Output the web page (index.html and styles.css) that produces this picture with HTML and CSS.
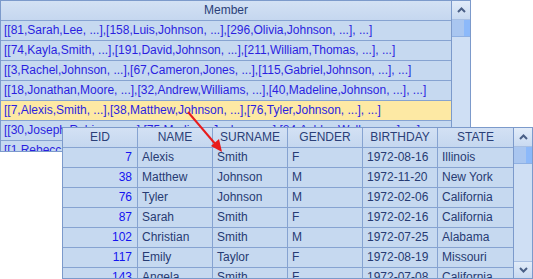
FILE: index.html
```html
<!DOCTYPE html>
<html>
<head>
<meta charset="utf-8">
<link rel="stylesheet" href="styles.css">
</head>
<body>
<div class="stage">
  <div class="grid members">
    <div class="body">
      <div class="hdr"><div class="hcell wide">Member</div></div>
      <div class="row"><div class="cell wide">[[81,Sarah,Lee, ...],[158,Luis,Johnson, ...],[296,Olivia,Johnson, ...], ...]</div></div>
      <div class="row"><div class="cell wide">[[74,Kayla,Smith, ...],[191,David,Johnson, ...],[211,William,Thomas, ...], ...]</div></div>
      <div class="row"><div class="cell wide">[[3,Rachel,Johnson, ...],[67,Cameron,Jones, ...],[115,Gabriel,Johnson, ...], ...]</div></div>
      <div class="row"><div class="cell wide">[[18,Jonathan,Moore, ...],[32,Andrew,Williams, ...],[40,Madeline,Johnson, ...], ...]</div></div>
      <div class="row sel"><div class="cell wide">[[7,Alexis,Smith, ...],[38,Matthew,Johnson, ...],[76,Tyler,Johnson, ...], ...]</div></div>
      <div class="row"><div class="cell wide">[[30,Joseph,Robinson, ...],[75,Madison,Jackson, ...],[84,Ashley,Wallace, ...], ...]</div></div>
      <div class="row"><div class="cell wide">[[1,Rebecca,Moore, ...],[19,Emma,Smith, ...],[55,Ryan,Johnson, ...], ...]</div></div>
    </div>
    <div class="sbar">
      <div class="sbtn up"><svg width="9" height="6" viewBox="0 0 9 6"><path d="M1 5 L4.5 1.5 L8 5" fill="none" stroke="#4a5f86" stroke-width="2"/></svg></div>
      <div class="thumb"><div class="shine"></div></div>
      <div class="track"></div>
      <div class="sbtn down"><svg width="9" height="6" viewBox="0 0 9 6"><path d="M1 1 L4.5 4.5 L8 1" fill="none" stroke="#4a5f86" stroke-width="2"/></svg></div>
    </div>
  </div>

  <div class="grid emps">
    <div class="body">
      <div class="hdr">
        <div class="hcell">EID</div><div class="hcell">NAME</div><div class="hcell">SURNAME</div><div class="hcell">GENDER</div><div class="hcell">BIRTHDAY</div><div class="hcell">STATE</div>
      </div>
      <div class="row"><div class="cell num">7</div><div class="cell">Alexis</div><div class="cell">Smith</div><div class="cell">F</div><div class="cell">1972-08-16</div><div class="cell">Illinois</div></div>
      <div class="row"><div class="cell num">38</div><div class="cell">Matthew</div><div class="cell">Johnson</div><div class="cell">M</div><div class="cell">1972-11-20</div><div class="cell">New York</div></div>
      <div class="row"><div class="cell num">76</div><div class="cell">Tyler</div><div class="cell">Johnson</div><div class="cell">M</div><div class="cell">1972-02-06</div><div class="cell">California</div></div>
      <div class="row"><div class="cell num">87</div><div class="cell">Sarah</div><div class="cell">Smith</div><div class="cell">F</div><div class="cell">1972-02-16</div><div class="cell">California</div></div>
      <div class="row"><div class="cell num">102</div><div class="cell">Christian</div><div class="cell">Smith</div><div class="cell">M</div><div class="cell">1972-07-25</div><div class="cell">Alabama</div></div>
      <div class="row"><div class="cell num">117</div><div class="cell">Emily</div><div class="cell">Taylor</div><div class="cell">F</div><div class="cell">1972-08-19</div><div class="cell">Missouri</div></div>
      <div class="row"><div class="cell num">143</div><div class="cell">Angela</div><div class="cell">Smith</div><div class="cell">F</div><div class="cell">1972-07-08</div><div class="cell">California</div></div>
    </div>
    <div class="sbar">
      <div class="sbtn up"><svg width="9" height="6" viewBox="0 0 9 6"><path d="M1 5 L4.5 1.5 L8 5" fill="none" stroke="#4a5f86" stroke-width="2"/></svg></div>
      <div class="thumb"><div class="shine"></div></div>
      <div class="track"></div>
      <div class="sbtn down"><svg width="9" height="6" viewBox="0 0 9 6"><path d="M1 1 L4.5 4.5 L8 1" fill="none" stroke="#4a5f86" stroke-width="2"/></svg></div>
    </div>
  </div>

  <svg class="arrow" width="533" height="279" viewBox="0 0 533 279">
    <line x1="188" y1="112" x2="217" y2="146" stroke="#e81c1c" stroke-width="2"/>
    <polygon points="222,152 211,146 219,139" fill="#e81c1c"/>
  </svg>
</div>
</body>
</html>
```

FILE: styles.css
```css
html, body {
  margin: 0;
  padding: 0;
  background: #ffffff;
}

.stage {
  position: relative;
  width: 533px;
  height: 279px;
  overflow: hidden;
  font-family: "Liberation Sans", Arial, sans-serif;
  font-size: 12px;
}

.grid {
  width: 471px;
  height: 152px;
  box-sizing: border-box;
  border: 1px solid #7c9acb;
  display: flex;
  background: #c6d9f0;
  overflow: hidden;
}

.emps {
  position: absolute;
  left: 62px;
  top: 127px;
}

.body {
  width: 451px;
  display: flex;
  flex-direction: column;
  border-right: 1px solid #7c9acb;
}

.hdr, .row {
  display: flex;
  height: 20px;
  box-sizing: border-box;
  border-bottom: 1px solid #86a3d1;
  flex: none;
}

.hdr {
  background: linear-gradient(#d3e1f4, #c5d7ef);
}

.row {
  background: #c6d9f0;
}

.row.sel {
  background: #fde9a4;
}

.hcell, .cell {
  width: 75px;
  box-sizing: border-box;
  border-right: 1px solid #86a3d1;
  line-height: 19px;
  white-space: nowrap;
  overflow: hidden;
  flex: none;
}

.hcell:last-child, .cell:last-child {
  border-right: none;
}

.hcell {
  text-align: center;
  color: #2a3f78;
}

.cell {
  padding: 0 3px 0 4px;
  color: #263b73;
}

.hdr .hcell.wide, .row .cell.wide {
  width: 450px;
  border-right: none;
}

.row .cell.wide {
  color: #2b1fe0;
  padding-left: 3px;
}

.cell.num {
  text-align: right;
  color: #1414f0;
  padding-right: 5px;
}

.sbar {
  width: 18px;
  display: flex;
  flex-direction: column;
  background: #d0e0f5;
}

.sbtn {
  height: 19px;
  box-sizing: border-box;
  display: flex;
  align-items: center;
  justify-content: center;
  background: linear-gradient(#e2ecf9, #c9daf1);
  flex: none;
}

.sbtn.up {
  border-bottom: 1px solid #a9c0e3;
}

.sbtn.down {
  border-top: 1px solid #a9c0e3;
  height: 17px;
}

.thumb {
  height: 16px;
  flex: none;
  background: #a9c6f0;
  border-bottom: 1px solid #8fb0e2;
  display: flex;
  justify-content: flex-end;
}

.shine {
  width: 6px;
  background: #8cb9fa;
}

.track {
  flex: 1;
  background: #cfdff4;
}

.arrow {
  position: absolute;
  left: 0;
  top: 0;
  pointer-events: none;
}
```
